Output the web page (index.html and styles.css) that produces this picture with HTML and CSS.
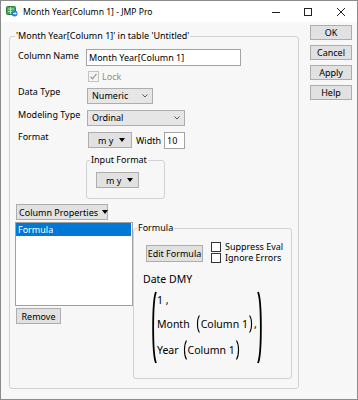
FILE: index.html
```html
<!DOCTYPE html>
<html lang="en">
<head>
    <meta charset="UTF-8">
    <meta name="viewport" content="width=device-width, initial-scale=1.0">
    <title>Month Year[Column 1] - JMP Pro</title>
    <link rel="stylesheet" href="styles.css">
</head>
<body>
    <div class="window">
        <!-- Title bar -->
        <div class="titlebar">
            <svg class="app-icon" width="12" height="11" viewBox="0 0 12 11">
                <rect x="0.5" y="0.5" width="9" height="8" rx="1" fill="#4aa35a" stroke="#2f7d3e"/>
                <path d="M2 3h6M2 5.5h6M4.5 1v7" stroke="#c9ecd0" stroke-width="0.8"/>
                <circle cx="8.5" cy="7.5" r="3" fill="#2b7fd4"/>
                <path d="M7 7.5h3M9 6.3l1.2 1.2L9 8.7" stroke="#fff" stroke-width="0.9" fill="none"/>
            </svg>
            <span class="title">Month Year[Column 1] - JMP Pro</span>
            <div class="caption">
                <span class="cap"><svg width="10" height="10" viewBox="0 0 10 10"><path d="M1 5.5h8" stroke="#222" stroke-width="1"/></svg></span>
                <span class="cap"><svg width="10" height="10" viewBox="0 0 10 10"><rect x="1.5" y="1.5" width="7" height="7" fill="none" stroke="#222" stroke-width="1"/></svg></span>
                <span class="cap close"><svg width="10" height="10" viewBox="0 0 10 10"><path d="M1 1l8 8M9 1l-8 8" stroke="#222" stroke-width="1"/></svg></span>
            </div>
        </div>

        <div class="client">
            <fieldset class="main-group">
                <legend>'Month Year[Column 1]' in table 'Untitled'</legend>

                <div class="props">
                    <div class="row r-name">
                        <span class="lbl">Column Name</span>
                        <div class="textbox name">Month Year[Column 1]</div>
                    </div>
                    <div class="row r-lock">
                        <span class="checkbox disabled">
                            <svg width="9" height="9" viewBox="0 0 9 9"><path d="M1.5 4.8l2 2 4-5" stroke="#9c9c9c" stroke-width="1.3" fill="none"/></svg>
                        </span>
                        <span class="muted">Lock</span>
                    </div>
                    <div class="row r-type">
                        <span class="lbl">Data Type</span>
                        <div class="combo type">Numeric<svg class="chev" width="6" height="4" viewBox="0 0 6 4"><path d="M0.5 0.5l2.5 2.5 2.5-2.5" stroke="#555" fill="none"/></svg></div>
                    </div>
                    <div class="row r-model">
                        <span class="lbl">Modeling Type</span>
                        <div class="combo model">Ordinal<svg class="chev" width="6" height="4" viewBox="0 0 6 4"><path d="M0.5 0.5l2.5 2.5 2.5-2.5" stroke="#555" fill="none"/></svg></div>
                    </div>
                    <div class="row r-format">
                        <span class="lbl">Format</span>
                        <div class="btn menu fmt">m y<span class="tri"></span></div>
                        <span class="width-lbl">Width</span>
                        <div class="textbox width">10</div>
                    </div>
                    <fieldset class="input-format">
                        <legend>Input Format</legend>
                        <div class="btn menu infmt">m y<span class="tri"></span></div>
                    </fieldset>
                </div>

                <div class="btn menu colprops">Column Properties<span class="tri"></span></div>

                <div class="lower">
                    <div class="list-col">
                        <div class="list">
                            <div class="sel">Formula</div>
                        </div>
                        <div class="btn remove">Remove</div>
                    </div>

                    <fieldset class="formula-group">
                        <legend>Formula</legend>
                        <div class="edit-row">
                            <div class="btn edit">Edit Formula</div>
                            <div class="checks">
                                <div class="check"><span class="box"></span>Suppress Eval</div>
                                <div class="check"><span class="box"></span>Ignore Errors</div>
                            </div>
                        </div>
                        <div class="date">Date DMY</div>
                        <div class="expr">
                            <svg class="big-paren" width="6" height="73" viewBox="0 0 6 73"><path d="M5 1C1.2 10 1.2 63 5 72" stroke="#000" stroke-width="1.8" fill="none"/></svg>
                            <div class="expr-lines">
                                <div class="line l1">1 ,</div>
                                <div class="line l2">Month
                                    <svg class="paren" width="4" height="18" viewBox="0 0 4 18"><path d="M3.5 0.5C0.8 4 0.8 14 3.5 17.5" stroke="#000" stroke-width="1.1" fill="none"/></svg>Column 1<svg class="paren" width="4" height="18" viewBox="0 0 4 18"><path d="M0.5 0.5C3.2 4 3.2 14 0.5 17.5" stroke="#000" stroke-width="1.1" fill="none"/></svg>,
                                </div>
                                <div class="line l3">Year
                                    <svg class="paren" width="4" height="20" viewBox="0 0 4 20"><path d="M3.5 0.5C0.8 5 0.8 15 3.5 19.5" stroke="#000" stroke-width="1.1" fill="none"/></svg>Column 1<svg class="paren" width="4" height="20" viewBox="0 0 4 20"><path d="M0.5 0.5C3.2 5 3.2 15 0.5 19.5" stroke="#000" stroke-width="1.1" fill="none"/></svg>
                                </div>
                            </div>
                            <svg class="big-paren" width="6" height="73" viewBox="0 0 6 73"><path d="M1 1C4.8 10 4.8 63 1 72" stroke="#000" stroke-width="1.8" fill="none"/></svg>
                        </div>
                    </fieldset>
                </div>
            </fieldset>

            <div class="side-buttons">
                <div class="btn">OK</div>
                <div class="btn">Cancel</div>
                <div class="btn">Apply</div>
                <div class="btn">Help</div>
            </div>
        </div>
    </div>
</body>
</html>
```

FILE: styles.css
```css
/* General */
* {
    box-sizing: border-box;
}
body {
    margin: 0;
    font-family: "Noto Sans", "Open Sans", sans-serif;
    font-size: 9px;
    color: #000;
    background: #f7f7f7;
}
.window {
    width: 358px;
    height: 400px;
    border: 1px solid #8c8c8c;
    background: #f7f7f7;
    display: flex;
    flex-direction: column;
}

/* Title bar */
.titlebar {
    height: 21px;
    flex: none;
    background: #fff;
    display: flex;
    align-items: center;
}
.app-icon {
    margin-left: 5px;
}
.title {
    margin-left: 5px;
    font-size: 8.6px;
    color: #000;
}
.caption {
    margin-left: auto;
    display: flex;
}
.cap {
    width: 32px;
    height: 21px;
    display: flex;
    align-items: center;
    justify-content: center;
}
.cap.close {
    width: 33px;
}

/* Client area */
.client {
    flex: 1;
    display: flex;
    align-items: flex-start;
}
fieldset {
    margin: 0;
    min-width: 0;
    border: 1px solid #d2d2d2;
    border-radius: 3px;
}
legend {
    padding: 0 1px;
    line-height: 12px;
}
.main-group {
    width: 290px;
    height: 359px;
    margin: 8px 0 0 8px;
    padding: 6px 0 0 5px;
}
.side-buttons {
    width: 42px;
    margin: 3px 0 0 11px;
    display: flex;
    flex-direction: column;
    gap: 5px;
}

/* Controls */
.btn {
    height: 15px;
    background: #e1e1e1;
    border: 1px solid #adadad;
    display: flex;
    align-items: center;
    justify-content: center;
    white-space: nowrap;
}
.btn.menu {
    justify-content: flex-start;
    height: 16px;
}
.tri {
    width: 0;
    height: 0;
    border-left: 3.5px solid transparent;
    border-right: 3.5px solid transparent;
    border-top: 4px solid #000;
}
.textbox {
    height: 17px;
    background: #fff;
    border: 1px solid #a3a3a3;
    padding-left: 2px;
    line-height: 15px;
}
.combo {
    height: 16px;
    background: #e6e6e6;
    border: 1px solid #adadad;
    padding-left: 4px;
    display: flex;
    align-items: center;
}
.chev {
    margin-left: auto;
    margin-right: 4px;
}
.checkbox {
    width: 11px;
    height: 11px;
    border: 1px solid #333;
    background: #fff;
    display: flex;
    align-items: center;
    justify-content: center;
}
.checkbox.disabled {
    border-color: #c4c4c4;
    background: #f4f4f4;
}
.muted {
    color: #8d8d8d;
}

/* Column properties */
.props {
    padding-left: 3px;
}
.row {
    display: flex;
    align-items: center;
}
.lbl {
    width: 68px;
    flex: none;
    align-self: flex-start;
    line-height: 12px;
}
.r-name {
    height: 18px;
}
.r-name .lbl {
    margin-top: 2px;
}
.textbox.name {
    width: 155px;
}
.r-lock {
    height: 14px;
    margin-top: 3px;
}
.r-lock .checkbox {
    margin-left: 70px;
}
.r-lock .muted {
    margin-left: 3px;
}
.r-type {
    height: 17px;
    margin-top: 4px;
}
.r-type .lbl {
    margin-top: -1px;
}
.combo.type {
    width: 66px;
    margin-left: 1px;
}
.r-model {
    height: 17px;
    margin-top: 5px;
}
.combo.model {
    width: 98px;
    margin-left: 1px;
}
.r-format {
    height: 18px;
    margin-top: 5px;
}
.fmt {
    width: 44px;
    margin-left: 2px;
    padding-left: 9px;
    gap: 6px;
}
.width-lbl {
    margin-left: 4px;
}
.textbox.width {
    width: 21px;
    margin-left: 3px;
}
.input-format {
    width: 79px;
    height: 45px;
    margin: 5px 0 0 68px;
    padding: 6px 0 0 3px;
}
.infmt {
    width: 43px;
    margin-left: 6px;
    padding-left: 9px;
    gap: 6px;
}
.colprops {
    width: 92px;
    margin: 5px 0 0 1px;
    padding-left: 2px;
    gap: 4px;
}

/* Lower section */
.lower {
    display: flex;
    margin-top: 2px;
}
.list-col {
    width: 118px;
    flex: none;
}
.list {
    height: 84px;
    background: #fff;
    border: 1px solid #a0a0a0;
    padding-right: 1px;
}
.sel {
    height: 13px;
    line-height: 13px;
    background: #0078d7;
    color: #fff;
    padding-left: 2px;
}
.remove {
    width: 45px;
    height: 16px;
    margin: 2px 0 0 1px;
}
.formula-group {
    width: 159px;
    height: 157px;
    padding: 7px 0 0 3px;
}
.edit-row {
    display: flex;
}
.edit {
    width: 57px;
    height: 17px;
    margin: 4px 0 0 9px;
}
.checks {
    margin-left: 8px;
    line-height: 11px;
}
.check {
    height: 11px;
    display: flex;
    align-items: center;
    white-space: nowrap;
}
.check .box {
    width: 10px;
    height: 10px;
    flex: none;
    border: 1px solid #333;
    background: #fff;
    margin-right: 4px;
}
.date {
    margin: 9px 0 0 6px;
    font-size: 10.5px;
    line-height: 14px;
}
.expr {
    display: flex;
    margin: 5px 0 0 14px;
    font-size: 10.5px;
}
.expr-lines {
    width: 100px;
    display: flex;
    flex-direction: column;
    gap: 4px;
}
.line {
    display: flex;
    align-items: center;
    white-space: nowrap;
}
.l1 {
    height: 18px;
}
.l2,
.l3 {
    height: 22px;
}
.paren {
    margin: 0 1px;
}
.l2 .paren:first-of-type {
    margin-left: 6px;
}
.l3 .paren:first-of-type {
    margin-left: 4px;
}
```
